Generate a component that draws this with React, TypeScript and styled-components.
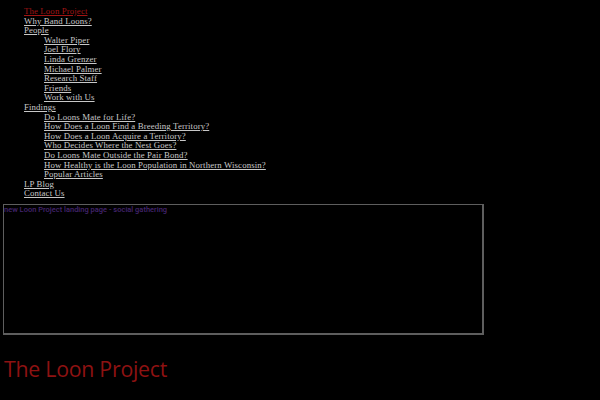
import React from 'react';
import styled, { createGlobalStyle } from 'styled-components';

const GlobalStyle = createGlobalStyle`
  html, body {
    margin: 0;
    padding: 0;
    background: #000;
  }
`;

const Page = styled.div`
  padding: 7px 3px 0 3px;
  font-family: "Liberation Serif", "DejaVu Serif", serif;
`;

const NavList = styled.ul<{ $nested?: boolean }>`
  list-style: none;
  margin: 0;
  padding: 0 0 0 ${p => (p.$nested ? 20 : 21)}px;
  font-size: 8.8px;
  line-height: 9.6px;
`;

const NavLink = styled.a<{ $current?: boolean }>`
  color: ${p => (p.$current ? '#a01414' : '#c8c8c8')};
  text-decoration: underline;
  letter-spacing: 0.12px;
`;

const Frame = styled.div`
  margin-top: 5px;
  width: 478px;
  height: 128px;
  border: 2px solid #5e5e5e;
  border-left-width: 1px;
  border-top-width: 1px;
`;

const FrameCaption = styled.div`
  font-family: "Roboto", "Liberation Sans", sans-serif;
  font-size: 7.5px;
  font-weight: 500;
  line-height: 9px;
  color: #44256f;
`;

const Title = styled.h1`
  margin: 20px 0 0 1px;
  font-family: "Open Sans", "Noto Sans", sans-serif;
  font-weight: 400;
  font-size: 21.3px;
  line-height: 28px;
  color: #8e1212;
  letter-spacing: -0.25px;
`;

type Item = { label: string; children?: string[]; current?: boolean };

const menu: Item[] = [
  { label: 'The Loon Project', current: true },
  { label: 'Why Band Loons?' },
  {
    label: 'People',
    children: ['Walter Piper', 'Joel Flory', 'Linda Grenzer', 'Michael Palmer', 'Research Staff', 'Friends', 'Work with Us'],
  },
  {
    label: 'Findings',
    children: [
      'Do Loons Mate for Life?',
      'How Does a Loon Find a Breeding Territory?',
      'How Does a Loon Acquire a Territory?',
      'Who Decides Where the Nest Goes?',
      'Do Loons Mate Outside the Pair Bond?',
      'How Healthy is the Loon Population in Northern Wisconsin?',
      'Popular Articles',
    ],
  },
  { label: 'LP Blog' },
  { label: 'Contact Us' },
];

export default function App() {
  return (
    <Page>
      <GlobalStyle />
      <nav>
        <NavList>
          {menu.map(item => (
            <li key={item.label}>
              <NavLink href="#" $current={item.current}>{item.label}</NavLink>
              {item.children && (
                <NavList $nested>
                  {item.children.map(c => (
                    <li key={c}>
                      <NavLink href="#">{c}</NavLink>
                    </li>
                  ))}
                </NavList>
              )}
            </li>
          ))}
        </NavList>
      </nav>
      <Frame>
        <FrameCaption>new Loon Project landing page - social gathering</FrameCaption>
      </Frame>
      <Title>The Loon Project</Title>
    </Page>
  );
}
